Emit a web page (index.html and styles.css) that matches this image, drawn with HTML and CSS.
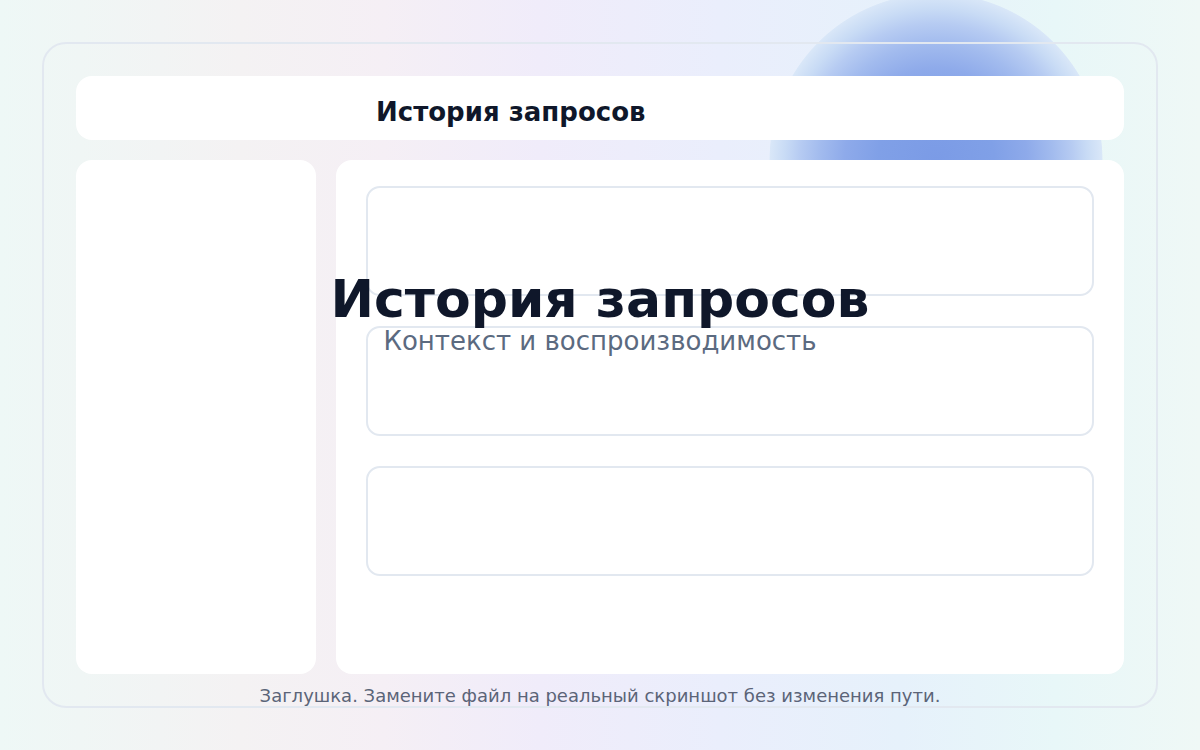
FILE: index.html
```html
<!DOCTYPE html>
<html lang="ru">
<head>
    <meta charset="UTF-8">
    <title>История запросов</title>
    <meta name="viewport" content="width=device-width, initial-scale=1.0">
    <link rel="stylesheet" href="styles.css">
</head>
<body>
    <div class="frame">
        <div class="topbar">
            <span class="topbar-title">История запросов</span>
        </div>
        <div class="panels">
            <div class="sidebar"></div>
            <div class="content">
                <div class="slot"></div>
                <div class="slot"></div>
                <div class="slot"></div>
            </div>
        </div>

        <!-- подпись поверх заглушки -->
        <div class="caption">
            <div class="caption-title">История запросов</div>
            <div class="caption-sub">Контекст и воспроизводимость</div>
        </div>
        <div class="note">Заглушка. Замените файл на реальный скриншот без изменения пути.</div>
    </div>
</body>
</html>
```

FILE: styles.css
```css
/* Общие стили */
html, body {
    margin: 0;
    padding: 0;
}
body {
    width: 1200px;
    height: 750px;
    overflow: hidden;
    font-family: 'DejaVu Sans', 'Noto Sans', sans-serif;
    background:
        radial-gradient(circle 166px at 936px 160px,
            #7b9be6 0%, #80a0e7 35%, #8eaaea 55%, #a2bbee 70%,
            #b6cbf2 82%, #c8dbf5 91%, #d9e7f8 100%, transparent 100.5%),
        linear-gradient(90deg, #eef8f6 0%, #f4f2f3 20%, #f5eff5 32%, #f0ecfa 45%, #eaeefc 60%, #e6f1fb 75%, #e8f7f8 88%, #eff8f6 100%);
}

/* Рамка */
.frame {
    position: relative;
    box-sizing: border-box;
    margin: 42px;
    width: 1116px;
    height: 666px;
    border: 2px solid #e2e8f0;
    border-radius: 24px;
    padding: 32px;
    display: flex;
    flex-direction: column;
    gap: 20px;
}
.topbar {
    height: 64px;
    background: #fff;
    border-radius: 16px;
    display: flex;
    align-items: center;
    padding-left: 300px;
}
.topbar-title {
    font-size: 26px;
    font-weight: 700;
    color: #0f172a;
    padding-top: 8px;
}
.panels {
    flex: 1;
    display: flex;
    gap: 20px;
}
.sidebar {
    width: 240px;
    background: #fff;
    border-radius: 16px;
}
.content {
    flex: 1;
    background: #fff;
    border-radius: 16px;
    padding: 26px 30px;
    display: flex;
    flex-direction: column;
    gap: 30px;
}
.slot {
    box-sizing: border-box;
    height: 110px;
    border: 2px solid #e2e8f0;
    border-radius: 14px;
}

/* Подпись поверх */
.caption {
    position: absolute;
    left: 0;
    right: 0;
    top: 227px;
    text-align: center;
}
.caption-title {
    font-size: 52px;
    line-height: 56px;
    font-weight: 700;
    color: #0f172a;
}
.caption-sub {
    font-size: 26px;
    line-height: 30px;
    color: #5b6a80;
    margin-top: -1px;
}
.note {
    position: absolute;
    left: 0;
    right: 0;
    top: 641px;
    text-align: center;
    font-size: 18px;
    color: #5b6478;
}
```
